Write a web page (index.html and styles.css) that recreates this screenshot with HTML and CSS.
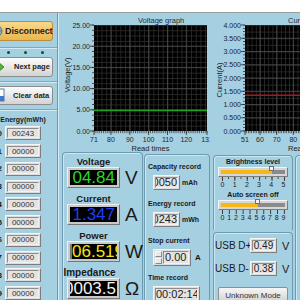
FILE: index.html
```html
<!DOCTYPE html>
<html lang="en">

<head>
  <meta charset="UTF-8">
  <title>USB Meter</title>
  <link rel="stylesheet" href="styles.css">
</head>

<body>
  <div class="topbar"></div>

  <div class="main">
    <div class="sidebar">
      <button class="side-btn disconnect-btn">
        <svg class="btn-icon" width="14" height="14" viewBox="0 0 14 14">
          <circle cx="7" cy="7" r="6" fill="#8fa9c2" stroke="#5a7590"/>
          <path d="M3 5a5 5 0 0 1 5-3" stroke="#fff" fill="none"/>
          <path d="M1 7h12M7 1v12" stroke="#5a7590" stroke-width="0.8"/>
        </svg>
        <span>Disconnect</span>
      </button>
      <div class="groove"></div>
      <div class="page-dots"><span></span><span></span><span></span></div>
      <button class="side-btn grey-btn">
        <svg class="btn-icon" width="16" height="14" viewBox="0 0 16 14">
          <path d="M0 4.5h8V1l7 6-7 6V9.5H0z" fill="#56b236" stroke="#2f7a1c" stroke-width="0.8"/>
        </svg>
        <span class="next-text">Next page</span>
      </button>
      <div class="groove"></div>
      <button class="side-btn grey-btn">
        <svg class="btn-icon" width="16" height="14" viewBox="0 0 16 14">
          <rect x="4" y="1" width="11" height="12" fill="#fff" stroke="#5b7ca8"/>
          <rect x="4" y="8" width="11" height="5" fill="#3d78c9"/>
        </svg>
        <span class="clear-text">Clear data</span>
      </button>
      <div class="groove"></div>

      <div class="energy-title"><span>Energy(mWh)</span></div>
      <div class="energy-list">
        <div class="energy-row"><span class="idx">0</span><div class="field"><div class="field-inner">00243</div></div></div>
        <div class="energy-row"><span class="idx">1</span><div class="field"><div class="field-inner">00000</div></div></div>
        <div class="energy-row"><span class="idx">2</span><div class="field"><div class="field-inner">00000</div></div></div>
        <div class="energy-row"><span class="idx">3</span><div class="field"><div class="field-inner">00000</div></div></div>
        <div class="energy-row"><span class="idx">4</span><div class="field"><div class="field-inner">00000</div></div></div>
        <div class="energy-row"><span class="idx">5</span><div class="field"><div class="field-inner">00000</div></div></div>
        <div class="energy-row"><span class="idx">6</span><div class="field"><div class="field-inner">00000</div></div></div>
        <div class="energy-row"><span class="idx">7</span><div class="field"><div class="field-inner">00000</div></div></div>
        <div class="energy-row"><span class="idx">8</span><div class="field"><div class="field-inner">00000</div></div></div>
        <div class="energy-row"><span class="idx">9</span><div class="field"><div class="field-inner">00000</div></div></div>
      </div>
    </div>

    <div class="content">
      <div class="graphs">
        <!-- voltage graph: 71..131 reads, 0..25 V -->
        <svg class="chart" width="148" height="139" viewBox="0 0 148 139">
          <defs>
            <pattern id="vGridX" x="34.825" y="0" width="4.708" height="10" patternUnits="userSpaceOnUse">
              <rect width="0.8" height="10" fill="#2c2c2c"/>
            </pattern>
            <pattern id="vGridY" x="0" y="12" width="10" height="5.3" patternUnits="userSpaceOnUse">
              <rect width="10" height="0.8" fill="#2c2c2c"/>
            </pattern>
            <pattern id="vTickY" x="0" y="11.6" width="4" height="5.3" patternUnits="userSpaceOnUse">
              <rect width="4" height="0.8" fill="#333"/>
            </pattern>
            <pattern id="vTickX" x="31.6" y="0" width="1.883" height="4" patternUnits="userSpaceOnUse">
              <rect width="0.7" height="4" fill="#333"/>
            </pattern>
          </defs>
          <text class="chart-title" x="76" y="10">Voltage graph</text>
          <rect x="32" y="12" width="113" height="106" fill="#000"/>
          <rect x="32" y="12" width="113" height="106" fill="url(#vGridX)"/>
          <rect x="32" y="12" width="113" height="106" fill="url(#vGridY)"/>
          <path class="grid-major" d="M48.95 12V118M67.8 12V118M86.6 12V118M105.5 12V118M124.3 12V118M32 33.2H145M32 54.4H145M32 75.6H145M32 96.8H145"/>
          <path class="trace-volt" d="M32 97.5H145"/>
          <rect x="30" y="11.6" width="2" height="107" fill="url(#vTickY)"/>
          <rect x="32" y="118" width="113.6" height="2.2" fill="url(#vTickX)"/>
          <path class="tick" d="M28 12H32M28 33.2H32M28 54.4H32M28 75.6H32M28 96.8H32M28 118H32M32 118V122M48.95 118V122M67.8 118V122M86.6 118V122M105.5 118V122M124.3 118V122M145 118V122"/>
          <g text-anchor="end">
            <text x="28" y="14.5">25.00</text>
            <text x="28" y="35.7">20.00</text>
            <text x="28" y="56.9">15.00</text>
            <text x="28" y="78.1">10.00</text>
            <text x="28" y="99.3">5.00</text>
            <text x="28" y="120.5">0.00</text>
          </g>
          <g text-anchor="middle">
            <text x="32" y="128.5">71</text>
            <text x="48.95" y="128.5">80</text>
            <text x="67.8" y="128.5">90</text>
            <text x="86.6" y="128.5">100</text>
            <text x="105.5" y="128.5">110</text>
            <text x="124.3" y="128.5">120</text>
            <text x="145" y="128.5">131</text>
            <text class="axis-name" x="88.5" y="137.5">Read times</text>
            <text class="axis-name" transform="translate(8 62) rotate(-90)">Voltage(V)</text>
          </g>
        </svg>

        <!-- current graph: 51.. reads, 0..4 A -->
        <svg class="chart" width="170" height="139" viewBox="0 0 170 139">
          <defs>
            <pattern id="cGridX" x="37.5" y="0" width="4.1667" height="10" patternUnits="userSpaceOnUse">
              <rect width="0.8" height="10" fill="#2c2c2c"/>
            </pattern>
            <pattern id="cGridY" x="0" y="12" width="10" height="6.625" patternUnits="userSpaceOnUse">
              <rect width="10" height="0.8" fill="#2c2c2c"/>
            </pattern>
            <pattern id="cTickY" x="0" y="11.6" width="4" height="3.3125" patternUnits="userSpaceOnUse">
              <rect width="4" height="0.8" fill="#333"/>
            </pattern>
            <pattern id="cTickX" x="34.6" y="0" width="1.6667" height="4" patternUnits="userSpaceOnUse">
              <rect width="0.7" height="4" fill="#333"/>
            </pattern>
          </defs>
          <text class="chart-title" x="78" y="10">Current graph</text>
          <rect x="35" y="12" width="135" height="106" fill="#000"/>
          <rect x="35" y="12" width="135" height="106" fill="url(#cGridX)"/>
          <rect x="35" y="12" width="135" height="106" fill="url(#cGridY)"/>
          <path class="grid-major" d="M50 12V118M66.7 12V118M83.3 12V118M100 12V118M116.7 12V118M133.3 12V118M150 12V118M35 25.25H170M35 38.5H170M35 51.75H170M35 65H170M35 78.25H170M35 91.5H170M35 104.75H170"/>
          <path class="trace-curr" d="M35 82.3H170"/>
          <rect x="33" y="11.6" width="2" height="107" fill="url(#cTickY)"/>
          <rect x="35" y="118" width="135" height="2.2" fill="url(#cTickX)"/>
          <path class="tick" d="M31 12H35M31 25.25H35M31 38.5H35M31 51.75H35M31 65H35M31 78.25H35M31 91.5H35M31 104.75H35M31 118H35M35 118V122M50 118V122M66.7 118V122M83.3 118V122M100 118V122M116.7 118V122"/>
          <g text-anchor="end">
            <text x="31" y="14.5">4.000</text>
            <text x="31" y="27.75">3.500</text>
            <text x="31" y="41">3.000</text>
            <text x="31" y="54.25">2.500</text>
            <text x="31" y="67.5">2.000</text>
            <text x="31" y="80.75">1.500</text>
            <text x="31" y="94">1.000</text>
            <text x="31" y="107.25">0.500</text>
            <text x="31" y="120.5">0.000</text>
          </g>
          <g text-anchor="middle">
            <text x="35" y="128.5">51</text>
            <text x="50" y="128.5">60</text>
            <text x="66.7" y="128.5">70</text>
            <text x="83.3" y="128.5">80</text>
            <text x="100" y="128.5">90</text>
            <text class="axis-name" transform="translate(12 67) rotate(-90)">Current(A)</text>
          </g>
          <text class="axis-name" x="78" y="137.5">Read times</text>
        </svg>
      </div>

      <div class="panels">
        <div class="panel readouts">
          <div class="readout">
            <div class="readout-label"><span>Voltage</span></div>
            <div class="readout-row">
              <div class="display"><div class="display-value volt">04.84</div></div>
              <span class="readout-unit">V</span>
            </div>
          </div>
          <div class="readout">
            <div class="readout-label"><span>Current</span></div>
            <div class="readout-row">
              <div class="display"><div class="display-value amp">1.347</div></div>
              <span class="readout-unit">A</span>
            </div>
          </div>
          <div class="readout">
            <div class="readout-label"><span>Power</span></div>
            <div class="readout-row">
              <div class="display"><div class="display-value watt">06.519</div></div>
              <span class="readout-unit">W</span>
            </div>
          </div>
          <div class="readout">
            <div class="readout-label impedance-label"><span>Impedance</span></div>
            <div class="readout-row">
              <div class="display"><div class="display-value ohm">0003.5</div></div>
              <span class="readout-unit">Ω</span>
            </div>
          </div>
        </div>

        <div class="panel records">
          <div class="record-label">Capacity record</div>
          <div class="record-row">
            <div class="field record-field"><div class="field-inner right">00050</div></div>
            <span class="record-unit">mAh</span>
          </div>
          <div class="record-label">Energy record</div>
          <div class="record-row">
            <div class="field record-field"><div class="field-inner right">00243</div></div>
            <span class="record-unit">mWh</span>
          </div>
          <div class="record-label">Stop current</div>
          <div class="record-row stop-row">
            <div class="field stop-field">
              <div class="spinner"><span class="spin up"></span><span class="spin down"></span></div>
              <div class="field-inner left">0.00</div>
            </div>
            <span class="record-unit amp-unit">A</span>
          </div>
          <div class="record-label">Time record</div>
          <div class="record-row">
            <div class="field time-field"><div class="field-inner left">00:02:14</div></div>
          </div>
        </div>

        <div class="settings">
          <div class="panel settings-top">
            <div class="setting-label"><span>Brightness level</span></div>
            <div class="slider">
              <div class="track"><div class="fill" style="width: 51px"></div></div>
              <span class="thumb" style="left: 52px"></span>
            </div>
            <div class="scale scale-5">
              <div class="scale-ticks"></div>
              <div class="scale-nums"><span>0</span><span>1</span><span>2</span><span>3</span><span>4</span><span>5</span></div>
            </div>
            <div class="setting-label"><span>Auto screen off</span></div>
            <div class="slider">
              <div class="track"><div class="fill" style="width: 37px"></div></div>
              <span class="thumb" style="left: 38px"></span>
            </div>
            <div class="scale scale-9">
              <div class="scale-ticks"></div>
              <div class="scale-nums"><span>0</span><span>1</span><span>2</span><span>3</span><span>4</span><span>5</span><span>6</span><span>7</span><span>8</span><span>9</span></div>
            </div>
          </div>
          <div class="panel settings-usb">
            <div class="usb-row">
              <span class="usb-label">USB D+</span>
              <div class="field usb-field"><div class="field-inner">0.49</div></div>
              <span class="usb-unit">V</span>
            </div>
            <div class="usb-row">
              <span class="usb-label">USB D-</span>
              <div class="field usb-field"><div class="field-inner">0.38</div></div>
              <span class="usb-unit">V</span>
            </div>
            <button class="mode-btn">Unknown Mode</button>
          </div>
        </div>

        <div class="panel extra"></div>
      </div>
    </div>
  </div>
</body>

</html>
```

FILE: styles.css
```css
* {
  box-sizing: border-box;
}

body {
  margin: 0;
  width: 300px;
  height: 300px;
  overflow: hidden;
  background-color: #a5d0e2;
  font-family: 'Liberation Sans', Arial, sans-serif;
  color: #1a1a1a;
}

.topbar {
  height: 13px;
  background: #fff;
  border-bottom: 1px solid #9c9c9c;
}

.main {
  display: flex;
  height: 287px;
}

/* left column */

.sidebar {
  flex: none;
  width: 72px;
  margin-left: -14px;
  padding: 8px 4px 0 2px;
  border-right: 1px solid #6e98ab;
  display: flex;
  flex-direction: column;
}

.side-btn {
  display: flex;
  align-items: center;
  width: 100%;
  height: 20px;
  padding: 0;
  border: 1px solid #8d8d8d;
  border-radius: 3px;
  font-family: inherit;
  font-weight: bold;
  color: #1e1e1e;
  white-space: nowrap;
  cursor: pointer;
}

.btn-icon {
  flex: none;
}

.disconnect-btn {
  background: linear-gradient(#f9d98a, #ebb54c);
  border-color: #b88d3d;
  font-size: 9px;
  letter-spacing: -0.1px;
}

.disconnect-btn .btn-icon {
  margin-right: 2px;
}

.grey-btn {
  background: linear-gradient(#fcfcfc, #d3d3d3);
  font-size: 7.5px;
}

.next-text {
  margin-left: 9px;
}

.clear-text {
  margin-left: 8px;
}

.groove {
  margin: 6px -4px 0 -2px;
  border-top: 1px solid #7ea9bc;
  border-bottom: 1px solid #d3ebf5;
}

.page-dots {
  display: flex;
  gap: 14px;
  margin-top: 2px;
  padding-left: 18.5px;
}

.page-dots span {
  width: 3px;
  height: 3px;
  border-radius: 50%;
  background-color: #1d4a1d;
}

.page-dots + .side-btn {
  margin-top: 3px;
}

.grey-btn + .groove {
  margin-top: 4px;
}

.groove + .grey-btn {
  margin-top: 3px;
}

.energy-title {
  display: flex;
  justify-content: center;
  width: 36px;
  margin: 5px 0 0 17px;
  font-size: 7px;
  font-weight: bold;
  line-height: 8px;
  white-space: nowrap;
}

.energy-list {
  display: grid;
  row-gap: 3.75px;
  margin-top: 2px;
}

.energy-row {
  display: flex;
  align-items: center;
}

.idx {
  width: 14px;
  text-align: right;
  font-size: 8px;
  font-weight: bold;
}

/* bevelled fields */

.field {
  display: flex;
  background-color: #dcdcdc;
  border: 1px solid;
  border-color: #f6f6f6 #7d7d7d #7d7d7d #f6f6f6;
  padding: 1px;
}

.field-inner {
  flex: 1;
  display: flex;
  justify-content: center;
  align-items: center;
  min-width: 0;
  overflow: hidden;
  white-space: nowrap;
  background-color: #e3e3e3;
  border: 1px solid;
  border-color: #8c8c8c #f2f2f2 #f2f2f2 #8c8c8c;
  color: #333;
}

.field-inner.right {
  justify-content: flex-end;
}

.field-inner.left {
  justify-content: flex-start;
}

.energy-row .field {
  width: 36px;
  height: 14px;
  margin-left: 3px;
}

.energy-row .field-inner {
  font-size: 8px;
}

/* main area */

.content {
  flex: 1;
  min-width: 0;
  border-left: 1px solid #d2ebf5;
  padding-left: 3px;
}

.graphs {
  display: flex;
  height: 139px;
}

.chart {
  flex: none;
  display: block;
}

.chart text {
  font-family: 'Liberation Sans', Arial, sans-serif;
  font-size: 7px;
  fill: #1e1e1e;
}

.chart .chart-title {
  font-size: 7.5px;
  fill: #2a2a2a;
}

.chart .axis-name {
  font-size: 7.5px;
}

.grid-major {
  stroke: #4c4c4c;
  stroke-width: 0.8;
}

.tick {
  stroke: #2a2a2a;
  stroke-width: 0.8;
}

.trace-volt {
  stroke: #23a323;
  stroke-width: 1.5;
}

.trace-curr {
  stroke: #b0141a;
  stroke-width: 1.5;
}

.panels {
  display: flex;
  align-items: flex-start;
}

.panel {
  flex: none;
  border: 1px solid #6f9bb0;
  border-bottom: none;
  border-radius: 4px 4px 0 0;
  box-shadow: inset 1px 1px 0 #cbe7f3;
}

/* big readouts */

.readouts {
  width: 81px;
  height: 160px;
  padding: 4px 0 0 4px;
}

.readout + .readout {
  margin-top: 6px;
}

.readout-label {
  display: flex;
  justify-content: center;
  width: 53px;
  height: 10px;
  font-size: 9.5px;
  font-weight: bold;
  line-height: 10px;
  white-space: nowrap;
}

.impedance-label {
  font-size: 10px;
  transform: translateX(-4px);
}

.readout-row {
  display: flex;
  align-items: center;
}

.display {
  width: 53px;
  height: 21px;
  padding: 2px;
  background-color: #c9c9c9;
  border: 1px solid;
  border-color: #f0f0f0 #767676 #767676 #f0f0f0;
}

.display-value {
  display: flex;
  justify-content: flex-end;
  height: 15px;
  padding-right: 2px;
  overflow: hidden;
  white-space: nowrap;
  background-color: #000;
  font-size: 17px;
  line-height: 15px;
}

.volt {
  color: #2bd62b;
}

.amp {
  color: #1d3ff0;
}

.watt {
  justify-content: flex-start;
  padding-right: 0;
  border-left: 2px solid #777;
  color: #f4e60c;
}

.ohm {
  padding-right: 1px;
  color: #f2f2f2;
}

.readout-unit {
  margin-left: 5px;
  font-size: 19px;
  line-height: 21px;
}

/* records */

.records {
  width: 66px;
  height: 160px;
  margin: 2px 0 0 1px;
  padding: 8px 0 0 3px;
}

.record-label {
  font-size: 7px;
  font-weight: bold;
  line-height: 8px;
  white-space: nowrap;
  margin-bottom: 4px;
}

.record-row {
  display: flex;
  align-items: center;
  margin: 0 0 10px 5px;
}

.record-field {
  width: 27px;
  height: 15px;
}

.record-field .field-inner,
.stop-field .field-inner,
.time-field .field-inner {
  font-size: 11px;
  line-height: 9px;
  color: #222;
}

.record-unit {
  margin-left: 2px;
  font-size: 7px;
  font-weight: bold;
}

.stop-row {
  margin-bottom: 8px;
}

.stop-field {
  width: 38px;
  height: 17px;
}

.spinner {
  display: flex;
  flex-direction: column;
  justify-content: space-between;
  width: 7px;
  margin-right: 1px;
}

.spin {
  height: 6px;
  background-color: #e8e8e8;
  border: 1px solid;
  border-color: #fafafa #8a8a8a #8a8a8a #fafafa;
}

.stop-field .field-inner {
  padding-left: 1px;
}

.amp-unit {
  margin-left: 4px;
  font-size: 8px;
}

.time-field {
  width: 47px;
  height: 17px;
}

/* settings */

.settings {
  flex: none;
  width: 80px;
  margin: 3px 0 0 3px;
}

.settings-top {
  height: 75px;
  padding: 2px 0 0 4px;
}

.setting-label {
  display: flex;
  justify-content: center;
  width: 70px;
  font-size: 7px;
  font-weight: bold;
  line-height: 8px;
  white-space: nowrap;
}

.slider {
  position: relative;
  width: 70px;
  height: 10px;
  margin-top: 1px;
  padding: 2px;
  background-color: #d6d6d6;
  border: 1px solid;
  border-color: #f4f4f4 #7c7c7c #7c7c7c #f4f4f4;
}

.track {
  height: 100%;
  background-color: #8b8b8b;
}

.fill {
  height: 100%;
  background-color: #f6b817;
}

.thumb {
  position: absolute;
  top: -2px;
  width: 5px;
  height: 5px;
  margin-left: -2px;
  background-color: #f4f4f4;
  border: 1px solid #6f6f6f;
}

.scale {
  width: 63px;
  margin-left: 4px;
}

.scale-ticks {
  height: 4px;
}

.scale-5 .scale-ticks {
  background:
    linear-gradient(to right, #3a3a3a 1px, transparent 1px) 0 0 / 12.4px 4px repeat-x,
    linear-gradient(to right, #3a3a3a 1px, transparent 1px) 0 0 / 6.2px 2px repeat-x;
}

.scale-9 .scale-ticks {
  background: linear-gradient(to right, #3a3a3a 1px, transparent 1px) 0 0 / 6.89px 4px repeat-x;
}

.scale-nums {
  display: flex;
  justify-content: space-between;
  width: 63px;
  height: 7px;
  padding-right: 1px;
  font-size: 7px;
  line-height: 7px;
}

.scale-nums span {
  display: flex;
  justify-content: center;
  width: 1px;
}

.scale + .setting-label {
  margin-top: 3px;
}

.settings-usb {
  height: 80px;
  margin-top: 2px;
  padding-top: 5px;
}

.usb-row {
  display: flex;
  align-items: center;
  height: 15px;
  margin-bottom: 8px;
}

.usb-label {
  width: 36px;
  padding-left: 1px;
  font-size: 10px;
  white-space: nowrap;
}

.usb-field {
  width: 27px;
  height: 15px;
}

.usb-field .field-inner {
  font-size: 10px;
  color: #222;
}

.usb-unit {
  margin-left: 5px;
  font-size: 11px;
}

.mode-btn {
  width: 70px;
  height: 17px;
  margin: 1px 0 0 4px;
  padding: 0;
  background: linear-gradient(#f6f6f6, #cfcfcf);
  border: 1px solid #8e8e8e;
  border-radius: 2px;
  font-family: inherit;
  font-size: 8px;
  color: #333;
  white-space: nowrap;
}

.extra {
  width: 20px;
  height: 160px;
  margin: 3px 0 0 2px;
}
```
